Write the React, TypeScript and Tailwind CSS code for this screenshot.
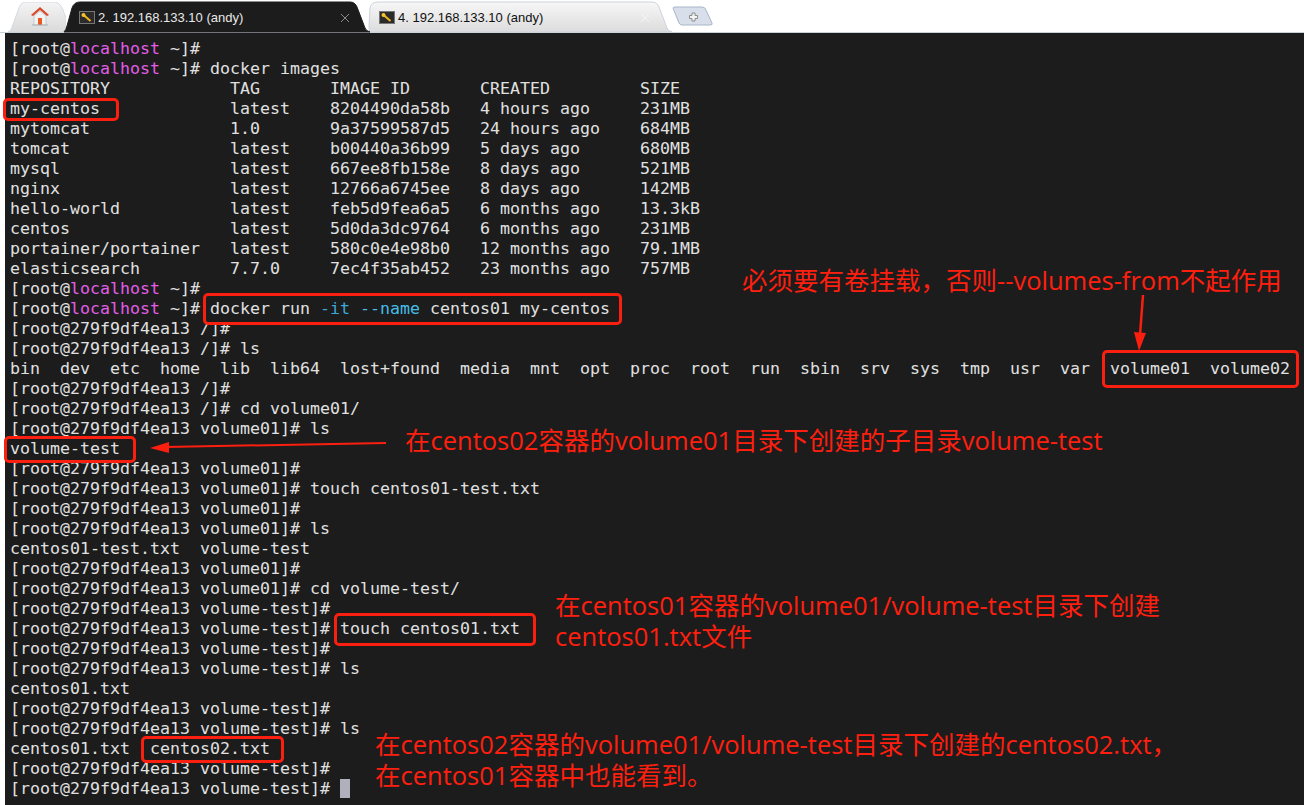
import React from "react";

const P = ({ rest }: { rest: string }) => (
  <>
    [root@<span className="text-[#e25ee8]">localhost</span> {rest}
  </>
);

const Line = ({ children }: { children?: React.ReactNode }) => (
  <div className="h-5 leading-5 whitespace-pre">{children}</div>
);

const rows = [
  "[root@279f9df4ea13 /]#",
  "[root@279f9df4ea13 /]# ls",
  "bin  dev  etc  home  lib  lib64  lost+found  media  mnt  opt  proc  root  run  sbin  srv  sys  tmp  usr  var  volume01  volume02",
  "[root@279f9df4ea13 /]#",
  "[root@279f9df4ea13 /]# cd volume01/",
  "[root@279f9df4ea13 volume01]# ls",
  "volume-test",
  "[root@279f9df4ea13 volume01]#",
  "[root@279f9df4ea13 volume01]# touch centos01-test.txt",
  "[root@279f9df4ea13 volume01]#",
  "[root@279f9df4ea13 volume01]# ls",
  "centos01-test.txt  volume-test",
  "[root@279f9df4ea13 volume01]#",
  "[root@279f9df4ea13 volume01]# cd volume-test/",
  "[root@279f9df4ea13 volume-test]#",
  "[root@279f9df4ea13 volume-test]# touch centos01.txt",
  "[root@279f9df4ea13 volume-test]#",
  "[root@279f9df4ea13 volume-test]# ls",
  "centos01.txt",
  "[root@279f9df4ea13 volume-test]#",
  "[root@279f9df4ea13 volume-test]# ls",
  "centos01.txt  centos02.txt",
  "[root@279f9df4ea13 volume-test]#",
];

const images = [
  "REPOSITORY            TAG       IMAGE ID       CREATED         SIZE",
  "my-centos             latest    8204490da58b   4 hours ago     231MB",
  "mytomcat              1.0       9a37599587d5   24 hours ago    684MB",
  "tomcat                latest    b00440a36b99   5 days ago      680MB",
  "mysql                 latest    667ee8fb158e   8 days ago      521MB",
  "nginx                 latest    12766a6745ee   8 days ago      142MB",
  "hello-world           latest    feb5d9fea6a5   6 months ago    13.3kB",
  "centos                latest    5d0da3dc9764   6 months ago    231MB",
  "portainer/portainer   latest    580c0e4e98b0   12 months ago   79.1MB",
  "elasticsearch         7.7.0     7ec4f35ab452   23 months ago   757MB",
];

const KeyIcon = () => (
  <svg width="16" height="13" viewBox="0 0 16 13" className="shrink-0">
    <rect x="0.5" y="0.5" width="15" height="12" fill="#2b2b2b" stroke="#777" />
    <path d="M4 3.5 L11.5 10" stroke="#f0b61e" strokeWidth="2" />
    <circle cx="4.5" cy="4" r="2" fill="#f7c52b" />
  </svg>
);

const CloseX = ({ c }: { c: string }) => (
  <svg width="10" height="10" viewBox="0 0 10 10" className="shrink-0">
    <path d="M1 1 L9 9 M9 1 L1 9" stroke={c} strokeWidth="1" />
  </svg>
);

const Tab = ({ label, active }: { label: string; active?: boolean }) => (
  <div className={`relative w-[302px] h-[30px] shrink-0 ${active ? "z-10 text-[#e8e8e8]" : "text-[#111]"}`}>
    <svg width="302" height="30" viewBox="0 0 302 30" className="absolute inset-0 overflow-visible">
      <defs>
        <linearGradient id="light" x1="0" y1="0" x2="0" y2="1">
          <stop offset="0" stopColor="#f7f7f7" />
          <stop offset="1" stopColor="#dcdcdc" />
        </linearGradient>
      </defs>
      <path
        d={
          active
            ? "M4 30 Q6 28 7 24 L12 6 Q14 0 20 0 L290 0 Q295 0 297 5 L305 26 Q306 29 310 30 Z"
            : "M10 30 Q9 28 9 24 L10 6 Q11 0 18 0 L292 0 Q297 0 299 5 L307 26 Q308 29 312 30 Z"
        }
        fill={active ? "#1c1c1c" : "url(#light)"}
        stroke={active ? "#1c1c1c" : "#ccd3dd"}
      />
    </svg>
    <div className="relative flex items-center h-full pt-[1px] pl-[19px] pr-[12px] gap-[3px] text-[13px] [font-family:'Liberation_Sans',sans-serif]">
      <KeyIcon />
      <span className="flex-1">{label}</span>
      <CloseX c={active ? "#8a8a8a" : "#f4f4f4"} />
    </div>
  </div>
);

const Note = ({ className, children }: { className: string; children: React.ReactNode }) => (
  <div
    className={`absolute whitespace-pre text-[#ff1f0f] text-[25.5px] leading-[31px] [font-family:'Open_Sans','Noto_Sans_CJK_SC',sans-serif] ${className}`}
  >
    {children}
  </div>
);

const Box = ({ className }: { className: string }) => (
  <div className={`absolute border-[3px] border-[#fb1f10] rounded-[5px] ${className}`} />
);

export default function App() {
  return (
    <div className="relative w-[1304px] h-[805px] bg-white overflow-hidden flex flex-col">
      <div className="relative h-[33px] shrink-0 flex items-end pl-[8px] border-b border-[#c8d0da]">
        <div className="relative w-[58px] h-[30px] shrink-0 -mr-[6px]">
          <svg width="58" height="30" viewBox="0 0 58 30" className="absolute inset-0">
            <defs>
              <linearGradient id="home" x1="0" y1="0" x2="0" y2="1">
                <stop offset="0" stopColor="#f4f4f4" />
                <stop offset="1" stopColor="#dadada" />
              </linearGradient>
            </defs>
            <path d="M0 30 L3 28 L11 6 Q13 0 18 0 L46 0 Q52 0 55 8 L58 16 L58 30 Z" fill="url(#home)" stroke="#d5dae0" />
            <path d="M32 5 L23 13 L25 14 L32 8 L39 14 L41 13 Z" fill="#d9482a" />
            <path d="M26 14 L32 9 L38 14 L38 23 L26 23 Z" fill="#f2f2f2" stroke="#b7c0c8" strokeWidth="0.7" />
            <rect x="30" y="16" width="4" height="7" fill="#e8581f" />
            <path d="M24 23 H40" stroke="#aab3b8" />
          </svg>
        </div>
        <Tab label="2. 192.168.133.10 (andy)" active />
        <div className="-ml-[2px]">
          <Tab label="4. 192.168.133.10 (andy)" />
        </div>
        <svg width="42" height="20" viewBox="0 0 42 20" className="ml-[10px] mb-[6px] shrink-0">
          <path d="M1 2 Q1 1 3 1 L30 1 Q33 1 34 4 L40 17 Q41 19 38 19 L10 19 Q8 19 7 17 Z" fill="#d8dfea" stroke="#a9b6c6" />
          <path d="M20 7 h3 v2.500 h2.500 v3 h-2.500 v2.500 h-3 v-2.500 h-2.500 v-3 h2.500 Z" fill="#f4f4f4" stroke="#8c8c8c" />
        </svg>
      </div>

      <div className="ml-[5px] flex-1 bg-[#1c1c1c] pt-[6px] pl-[5px] text-[#e0e0e0] text-[16.61px] [font-family:'DejaVu_Sans_Mono',monospace]">
        <Line><P rest="~]#" /></Line>
        <Line><P rest="~]# docker images" /></Line>
        {images.map((r) => <Line key={r}>{r}</Line>)}
        <Line><P rest="~]#" /></Line>
        <Line>
          <P rest="~]# docker run " />
          <span className="text-[#3fa7d6]">-it </span>
          <span className="text-[#45bde6]">--name</span> centos01 my-centos
        </Line>
        {rows.map((r, i) => <Line key={i}>{r}</Line>)}
        <Line>
          {"[root@279f9df4ea13 volume-test]# "}
          <span className="inline-block w-[10px] h-[19px] align-top bg-[#b0b0bc]" />
        </Line>
      </div>

      <Box className="left-[3px] top-[98px] w-[116px] h-[23px]" />
      <Box className="left-[203px] top-[293px] w-[419px] h-[32px]" />
      <Box className="left-[1102px] top-[350px] w-[197px] h-[38px]" />
      <Box className="left-[4px] top-[436px] w-[132px] h-[27px]" />
      <Box className="left-[334px] top-[613px] w-[202px] h-[33px]" />
      <Box className="left-[141px] top-[736px] w-[143px] h-[27px]" />

      <svg width="1304" height="805" viewBox="0 0 1304 805" className="absolute inset-0 pointer-events-none">
        <path d="M1143 295 L1140 335" stroke="#fb1f10" strokeWidth="2.500" />
        <path d="M1134 332 L1146 333 L1139 351 Z" fill="#fb1f10" />
        <path d="M386 443 L165 447" stroke="#fb1f10" strokeWidth="2" />
        <path d="M150 448 L169 442 L169 453 Z" fill="#fb1f10" />
      </svg>

      <Note className="left-[742px] top-[265px]">必须要有卷挂载，否则--volumes-from不起作用</Note>
      <Note className="left-[405px] top-[425px]">在centos02容器的volume01目录下创建的子目录volume-test</Note>
      <Note className="left-[555px] top-[590px]">{"在centos01容器的volume01/volume-test目录下创建\ncentos01.txt文件"}</Note>
      <Note className="left-[375px] top-[729px]">{"在centos02容器的volume01/volume-test目录下创建的centos02.txt，\n在centos01容器中也能看到。"}</Note>
    </div>
  );
}
